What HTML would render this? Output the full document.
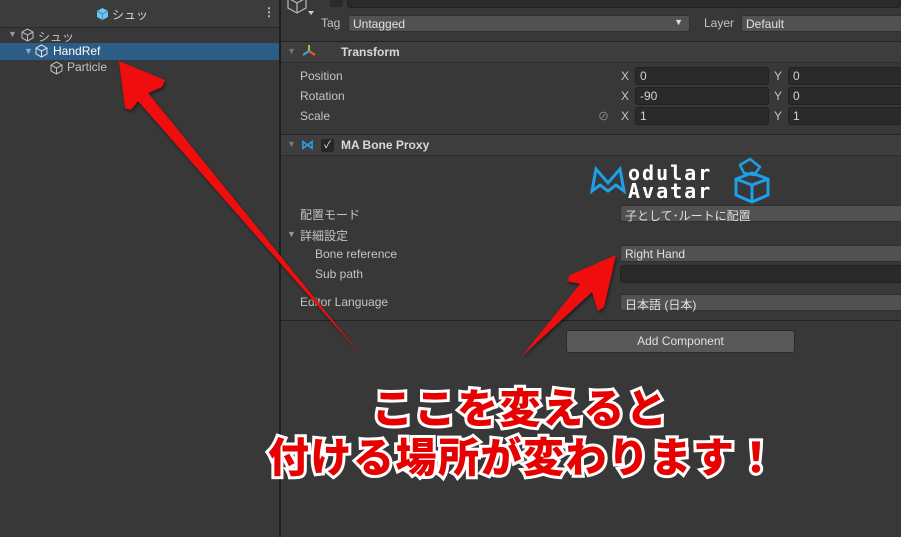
<!DOCTYPE html>
<html><head><meta charset="utf-8"><style>
*{margin:0;padding:0;box-sizing:border-box}
body{width:901px;height:537px;overflow:hidden;background:#383838;font-family:"Liberation Sans","Noto Sans CJK JP",sans-serif;font-size:12px;color:#c4c4c4;position:relative}
.a{position:absolute;white-space:nowrap}
.fld{position:absolute;background:#2a2a2a;border:1px solid #212121;border-radius:3px;height:18px;padding:1px 4px;color:#d2d2d2}
.dd{position:absolute;background:#515151;border:1px solid #303030;border-radius:3px;height:18px;padding:1px 4px;color:#e0e0e0}
.ln{position:absolute;height:1px;background:#232323}
.big{position:absolute;font-family:"Noto Sans CJK JP",sans-serif;font-weight:900;color:#e60000;-webkit-text-stroke:6px #fff;paint-order:stroke fill;white-space:nowrap;letter-spacing:1.5px}
</style></head><body>
<div class="a" style="left:0;top:0;width:279px;height:28px;background:#3c3c3c;border-bottom:1px solid #2a2a2a"></div>
<svg class="a" style="left:96px;top:7px" width="13" height="14" viewBox="0 0 13 14"><path d="M6.5 1 L12 4 L12 10 L6.5 13 L1 10 L1 4 Z" fill="#6ec6f0"/><path d="M1 4 L6.5 7 L12 4 M6.5 7 L6.5 13" stroke="#3a8fc0" fill="none"/></svg>
<div class="a" style="left:112px;top:6px;color:#d8d8d8">シュッ</div>
<div class="a" style="left:263px;top:5px;color:#c0c0c0;font-weight:bold">⋮</div>
<div class="a" style="left:8px;top:29px;color:#999;font-size:9px">▼</div>
<svg class="a" style="left:21px;top:28px" width="13" height="14" viewBox="0 0 13 14"><path d="M6.5 1 L12 4 L12 10 L6.5 13 L1 10 L1 4 Z M1 4 L6.5 7 L12 4 M6.5 7 L6.5 13" stroke="#bbb" fill="none"/></svg>
<div class="a" style="left:38px;top:28px">シュッ</div>
<div class="a" style="left:0;top:43px;width:279px;height:17px;background:#2c5d87"></div>
<div class="a" style="left:24px;top:46px;color:#8fa9c4;font-size:9px">▼</div>
<svg class="a" style="left:35px;top:44px" width="13" height="14" viewBox="0 0 13 14"><path d="M6.5 1 L12 4 L12 10 L6.5 13 L1 10 L1 4 Z M1 4 L6.5 7 L12 4 M6.5 7 L6.5 13" stroke="#dde" fill="none"/></svg>
<div class="a" style="left:53px;top:44px;color:#fff">HandRef</div>
<svg class="a" style="left:50px;top:61px" width="13" height="14" viewBox="0 0 13 14"><path d="M6.5 1 L12 4 L12 10 L6.5 13 L1 10 L1 4 Z M1 4 L6.5 7 L12 4 M6.5 7 L6.5 13" stroke="#bbb" fill="none"/></svg>
<div class="a" style="left:67px;top:60px">Particle</div>
<div class="a" style="left:279px;top:0;width:2px;height:537px;background:#1e1e1e"></div>
<svg class="a" style="left:286px;top:-6px" width="30" height="26" viewBox="0 0 30 26"><path d="M11 0 L20 4 L20 14 L11 19 L2 14 L2 4 Z M2 4 L11 9 L20 4 M11 9 L11 19" stroke="#bbb" fill="none" stroke-width="1.2"/><path d="M22 17 L28 17 L25 21 Z" fill="#ccc"/></svg>
<div class="a" style="left:330px;top:-4px;width:13px;height:11px;background:#2a2a2a;border-radius:2px"></div>
<div class="fld" style="left:347px;top:-10px;width:554px;height:18px"></div>
<div class="a" style="left:321px;top:16px">Tag</div>
<div class="dd" style="left:348px;top:15px;width:342px;height:17px">Untagged<span style="position:absolute;right:6px;top:1px;font-size:9px">▼</span></div>
<div class="a" style="left:704px;top:16px">Layer</div>
<div class="dd" style="left:741px;top:15px;width:170px;height:17px">Default</div>
<div class="ln" style="left:281px;top:41px;width:620px"></div>
<div class="a" style="left:281px;top:42px;width:620px;height:20px;background:#3e3e3e"></div>
<div class="a" style="left:287px;top:46px;color:#777;font-size:9px">▼</div>
<svg class="a" style="left:301px;top:44px" width="16" height="14" viewBox="0 0 16 14"><path d="M8 1 L8 7" stroke="#8ccf3c" stroke-width="2"/><path d="M8 7 L2 11" stroke="#3fa0e8" stroke-width="2"/><path d="M8 7 L14 11" stroke="#e8602c" stroke-width="2"/></svg>
<div class="a" style="left:341px;top:45px;font-weight:bold;color:#d8d8d8">Transform</div>
<div class="ln" style="left:281px;top:62px;width:620px;background:#2e2e2e"></div>
<div class="a" style="left:300px;top:69px">Position</div>
<div class="a" style="left:300px;top:89px">Rotation</div>
<div class="a" style="left:300px;top:109px">Scale</div>
<div class="a" style="left:598px;top:108px;color:#999;font-size:11px">⊘</div>
<div class="a" style="left:621px;top:69px">X</div><div class="fld" style="left:635px;top:67px;width:134px">0</div>
<div class="a" style="left:621px;top:89px">X</div><div class="fld" style="left:635px;top:87px;width:134px">-90</div>
<div class="a" style="left:621px;top:109px">X</div><div class="fld" style="left:635px;top:107px;width:134px">1</div>
<div class="a" style="left:774px;top:69px">Y</div><div class="fld" style="left:788px;top:67px;width:120px">0</div>
<div class="a" style="left:774px;top:89px">Y</div><div class="fld" style="left:788px;top:87px;width:120px">0</div>
<div class="a" style="left:774px;top:109px">Y</div><div class="fld" style="left:788px;top:107px;width:120px">1</div>
<div class="ln" style="left:281px;top:134px;width:620px"></div>
<div class="a" style="left:281px;top:135px;width:620px;height:20px;background:#3e3e3e"></div>
<div class="a" style="left:287px;top:139px;color:#777;font-size:9px">▼</div>
<div class="a" style="left:301px;top:137px;color:#2a9be0;font-weight:bold;font-size:13px">⋈</div>
<div class="a" style="left:321px;top:139px;width:13px;height:13px;background:#262626;border-radius:2px;color:#eee;font-size:10px;text-align:center;line-height:13px">✓</div>
<div class="a" style="left:341px;top:138px;font-weight:bold;color:#d8d8d8">MA Bone Proxy</div>
<div class="ln" style="left:281px;top:155px;width:620px;background:#2e2e2e"></div>
<svg class="a" style="left:588px;top:155px" width="190" height="50" viewBox="0 0 190 50">
<path d="M4 36 L8 14 L20 28 L32 14 L36 36 L28 30 L20 36 L12 30 Z" fill="none" stroke="#1da0e8" stroke-width="3"/>
<text x="40" y="25" font-family="DejaVu Sans Mono,monospace" font-size="20" fill="#fff" font-weight="bold" letter-spacing="2">odular</text>
<text x="40" y="43" font-family="DejaVu Sans Mono,monospace" font-size="20" fill="#fff" font-weight="bold" letter-spacing="2">Avatar</text>
<path d="M148 24 L164 18 L180 24 L180 40 L164 47 L148 40 Z M148 24 L164 30 L180 24 M164 30 L164 47" fill="none" stroke="#1da0e8" stroke-width="3"/>
<path d="M152 10 L162 4 L172 12 L166 20 L156 18 Z" fill="none" stroke="#1da0e8" stroke-width="2.5"/>
</svg>
<div class="a" style="left:300px;top:206px">配置モード</div>
<div class="dd" style="left:620px;top:205px;width:290px;height:17px">子として･ルートに配置</div>
<div class="a" style="left:287px;top:229px;color:#999;font-size:9px">▼</div>
<div class="a" style="left:300px;top:227px">詳細設定</div>
<div class="a" style="left:315px;top:247px">Bone reference</div>
<div class="dd" style="left:620px;top:245px;width:290px;height:17px">Right Hand</div>
<div class="a" style="left:315px;top:267px">Sub path</div>
<div class="fld" style="left:620px;top:265px;width:290px;height:18px"></div>
<div class="a" style="left:300px;top:295px">Editor Language</div>
<div class="dd" style="left:620px;top:294px;width:290px;height:17px">日本語 (日本)</div>
<div class="ln" style="left:281px;top:320px;width:620px"></div>
<div class="a" style="left:566px;top:330px;width:229px;height:23px;background:#585858;border:1px solid #2a2a2a;border-radius:3px;color:#e0e0e0;text-align:center;line-height:21px">Add Component</div>
<svg class="a" style="left:0;top:0" width="901" height="537">
<defs><filter id="s"><feDropShadow dx="1" dy="2" stdDeviation="1.5" flood-color="#000" flood-opacity=".5"/></filter></defs>
<polygon filter="url(#s)" fill="#f00a0a" points="119,61 165,80 162,87 148,93 361,355 138,101 131,110 125,108"/>
<polygon filter="url(#s)" fill="#f00a0a" points="616,255 604,307 598,311 592,292 521,357 580,284 567,281 570,275"/>
</svg>
<div class="big" style="left:372px;top:380px;font-size:41px;line-height:50px">ここを変えると</div>
<div class="big" style="left:268px;top:428px;font-size:41px;line-height:52px">付ける場所が変わります！</div>
</body></html>
